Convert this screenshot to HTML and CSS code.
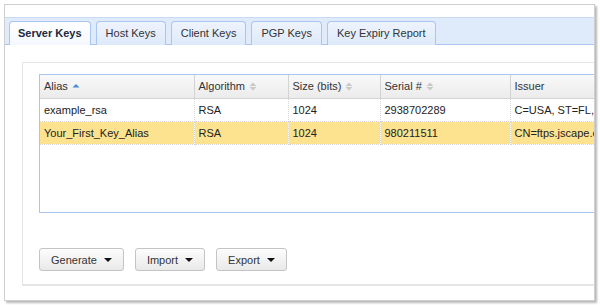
FILE: index.html
```html
<!DOCTYPE html>
<html lang="en">
<head>
  <meta charset="UTF-8" />
  <title>Server Keys</title>
  <link rel="stylesheet" href="styles.css">
</head>
<body>
  <div class="window">
    <div class="tabbar">
      <div class="tab active">Server Keys</div>
      <div class="tab">Host Keys</div>
      <div class="tab">Client Keys</div>
      <div class="tab">PGP Keys</div>
      <div class="tab">Key Expiry Report</div>
    </div>
    <div class="body">
      <div class="panel">
        <div class="grid">
          <table>
            <colgroup>
              <col style="width:154px"><col style="width:94px"><col style="width:92px"><col style="width:130px"><col>
            </colgroup>
            <thead>
              <tr>
                <th>Alias <svg class="sort" width="8" height="9" viewBox="0 0 8 9"><path d="M0.5 5.5 L4 2 L7.5 5.5 Z" fill="#4a8bd0"/></svg></th>
                <th>Algorithm <svg class="sort" width="8" height="9" viewBox="0 0 8 9"><path d="M0.5 4 L4 0.5 L7.5 4 Z M0.5 5 L4 8.5 L7.5 5 Z" fill="#c9c9c9"/></svg></th>
                <th>Size (bits) <svg class="sort" width="8" height="9" viewBox="0 0 8 9"><path d="M0.5 4 L4 0.5 L7.5 4 Z M0.5 5 L4 8.5 L7.5 5 Z" fill="#c9c9c9"/></svg></th>
                <th>Serial # <svg class="sort" width="8" height="9" viewBox="0 0 8 9"><path d="M0.5 4 L4 0.5 L7.5 4 Z M0.5 5 L4 8.5 L7.5 5 Z" fill="#c9c9c9"/></svg></th>
                <th>Issuer</th>
              </tr>
            </thead>
            <tbody>
              <tr>
                <td>example_rsa</td>
                <td>RSA</td>
                <td>1024</td>
                <td>2938702289</td>
                <td>C=USA, ST=FL,</td>
              </tr>
              <tr class="selected">
                <td>Your_First_Key_Alias</td>
                <td>RSA</td>
                <td>1024</td>
                <td>980211511</td>
                <td>CN=ftps.jscape.com</td>
              </tr>
            </tbody>
          </table>
        </div>
        <div class="actions">
          <button class="btn">Generate <span class="caret"></span></button>
          <button class="btn">Import <span class="caret"></span></button>
          <button class="btn">Export <span class="caret"></span></button>
        </div>
      </div>
    </div>
  </div>
</body>
</html>
```

FILE: styles.css
```css
* {
  margin: 0;
  padding: 0;
  box-sizing: border-box;
}
body {
  font-family: 'Liberation Sans', Arial, sans-serif;
  font-size: 11px;
  color: #222;
  background: #fff;
}
.window {
  margin: 4px;
  width: 591px;
  height: 297px;
  border: 1px solid #cfcfcf;
  box-shadow: 2px 2px 2px rgba(0,0,0,0.28);
  background: #fff;
  overflow: hidden;
  padding-top: 12px;
}
.tabbar {
  display: flex;
  gap: 5px;
  height: 28px;
  padding: 3px 0 0 4px;
  background: #dfeafb;
  border-top: 1px solid #c9dbf3;
  border-bottom: 1px solid #a9c6ee;
}
.tab {
  height: 24px;
  line-height: 22px;
  padding: 0 9px;
  border: 1px solid #a9c6ee;
  border-bottom: none;
  border-radius: 4px 4px 0 0;
  background: linear-gradient(#eef4fd, #dde9fa);
  color: #333;
  white-space: nowrap;
}
.tab.active {
  font-weight: bold;
  color: #1c2a3d;
  background: linear-gradient(#ffffff, #f4f8fe);
  padding: 0 8px;
}
.body {
  padding: 17px 0 0 17px;
}
.panel {
  width: 640px;
  height: 224px;
  border: 1px solid #e6e6e6;
  border-bottom-width: 2px;
  padding: 11px 0 0 16px;
}
.grid {
  height: 139px;
  border: 1px solid #a8c7f0;
  overflow: hidden;
}
table {
  border-collapse: collapse;
  table-layout: fixed;
  width: 700px;
}
th {
  height: 23px;
  padding: 0 4px;
  text-align: left;
  font-weight: normal;
  color: #333;
  background: linear-gradient(#f9f9f9, #ebebeb);
  border-right: 1px solid #d3d3d3;
  border-bottom: 1px solid #d3d3d3;
  white-space: nowrap;
}
.sort {
  vertical-align: -1px;
  margin-left: 1px;
}
td {
  height: 23px;
  padding: 0 4px;
  border-right: 1px dotted #d6d6d6;
  border-bottom: 1px dotted #d6d6d6;
  white-space: nowrap;
  overflow: hidden;
}
tr.selected td {
  background: #fde28f;
}
.actions {
  display: flex;
  gap: 11px;
  margin-top: 35px;
}
.btn {
  height: 23px;
  padding: 0 11px;
  font: inherit;
  color: #333;
  border: 1px solid #c4c4c4;
  border-radius: 3px;
  background: linear-gradient(#fdfdfd, #e9e9e9);
  display: flex;
  align-items: center;
  gap: 7px;
}
.caret {
  width: 0;
  height: 0;
  border-left: 4px solid transparent;
  border-right: 4px solid transparent;
  border-top: 4px solid #111;
}
```
